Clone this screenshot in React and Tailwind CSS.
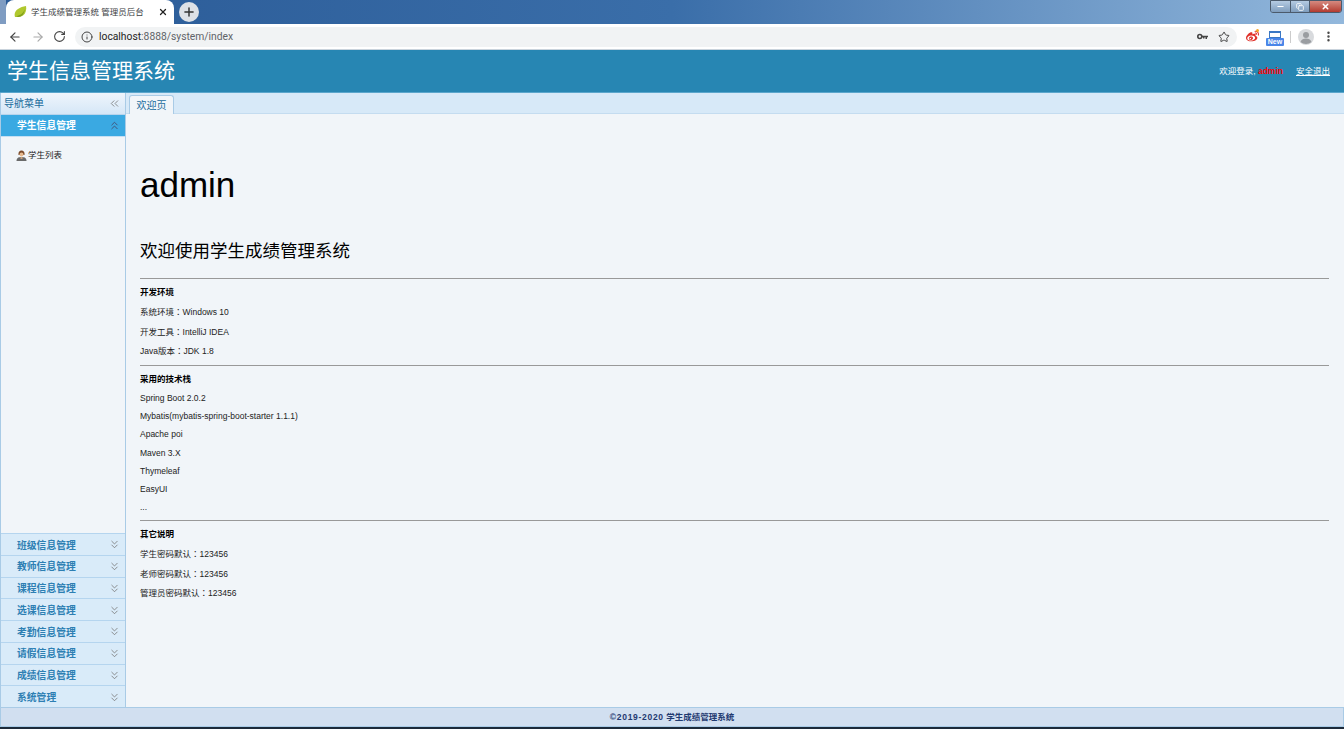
import React from 'react';
import { ArrowLeft, ArrowRight, RotateCw, Info, Star, Plus, X, EllipsisVertical, ChevronsLeft, ChevronsUp, ChevronsDown, Minus, Copy } from 'lucide-react';
import { FaWeibo } from 'react-icons/fa';

const cjk = '"Liberation Sans", "Noto Sans CJK SC", sans-serif';

const menus = ['班级信息管理', '教师信息管理', '课程信息管理', '选课信息管理', '考勤信息管理', '请假信息管理', '成绩信息管理', '系统管理'];

function Leaf() {
  return (
    <svg width="13" height="12" viewBox="0 0 13 12">
      <path d="M1 11C-1 5 5 1 12 0c1 6-2 11-8 11z" fill="#b0c82e" />
      <path d="M2 10c3 0 7-2 9-7-1 5-3 8-7 8z" fill="#7f9f1c" />
    </svg>
  );
}

function KeyIcon() {
  return (
    <svg width="11" height="8" viewBox="0 0 11 8" className="ml-auto">
      <circle cx="2.800" cy="3.500" r="2" fill="none" stroke="#444" strokeWidth="1.600" />
      <path d="M5 2.700h6v1.600h-1v1.700H8.500V4.300H7.500v1.200H6V4.300H5z" fill="#444" />
    </svg>
  );
}

function Avatar() {
  return (
    <svg width="16" height="16" viewBox="0 0 16 16">
      <circle cx="8" cy="8" r="8" fill="#d8dadd" />
      <circle cx="8" cy="6" r="3" fill="#9a9da1" />
      <path d="M2.500 13c1-3 3-3.500 5.500-3.500s4.500.5 5.500 3.500c-3 2.500-8 2.500-11 0z" fill="#9a9da1" />
    </svg>
  );
}

function Student() {
  return (
    <svg width="11" height="11" viewBox="0 0 11 11">
      <path d="M2.500 5c-.5-3 1-4.500 3-4.500s3.500 1.500 3 4.500z" fill="#7b4a2a" />
      <circle cx="5.500" cy="4.500" r="2" fill="#e6b98e" />
      <path d="M.5 11c0-3.500 2.500-4 5-4s5 .5 5 4z" fill="#6a6a6a" />
      <path d="M4.500 7h2v2h-2z" fill="#c9a27c" />
    </svg>
  );
}

function Browser() {
  return (
    <div className="shrink-0">
      <div className="h-[24px] flex items-end bg-gradient-to-r from-[#2a5a96] via-[#3a6ea9] to-[#93b8dc]">
        <div className="w-[6px] h-full bg-[#7f9cc2]" />
        <div className="w-[168px] h-[24px] bg-white rounded-t-[8px] flex items-center pl-[8px] pr-[6px] gap-[4px]">
          <Leaf />
          <span className="text-[8.500px] text-[#3c4043] flex-1 whitespace-nowrap">学生成绩管理系统 管理员后台</span>
          <X size={10} strokeWidth={3} className="text-[#222]" />
        </div>
        <div className="ml-[5px] mb-[2px] w-[20px] h-[20px] rounded-full bg-[#dee1e6] flex items-center justify-center">
          <Plus size={14} strokeWidth={2.500} className="text-[#333]" />
        </div>
        <div className="ml-auto self-start mr-[2px] flex h-[13px] border border-[#4b5a6b] rounded-b-[3px] overflow-hidden">
          <div className="w-[19px] bg-gradient-to-b from-[#b5cbe2] to-[#7f9dbd] flex items-center justify-center"><Minus size={9} strokeWidth={3} className="text-white" /></div>
          <div className="w-[19px] bg-gradient-to-b from-[#b5cbe2] to-[#7f9dbd] border-l border-[#4b5a6b] flex items-center justify-center"><Copy size={8} strokeWidth={2.500} className="text-white" /></div>
          <div className="w-[32px] bg-gradient-to-b from-[#d58a80] to-[#b23a30] border-l border-[#4b5a6b] flex items-center justify-center"><X size={9} strokeWidth={4} className="text-white" /></div>
        </div>
      </div>
      <div className="h-[26px] bg-white flex items-center border-b border-[#c9d3dc]">
        <ArrowLeft size={14} strokeWidth={2} className="ml-[8px] text-[#444]" />
        <ArrowRight size={14} strokeWidth={2} className="ml-[9px] text-[#aaa]" />
        <RotateCw size={13} strokeWidth={2} className="ml-[8px] text-[#444]" />
        <div className="ml-[9px] w-[1162px] h-[20px] rounded-full bg-[#f1f3f4] flex items-center pl-[6px] pr-[7px]">
          <Info size={12} className="text-[#444]" />
          <span className="ml-[6px] mt-px text-[10.300px] text-[#5f6368]" style={{ fontFamily: 'Roboto, sans-serif' }}><span className="text-[#222]">localhost</span>:8888/system/index</span>
          <KeyIcon />
          <Star size={12} strokeWidth={2} className="ml-[10px] text-[#444]" />
        </div>
        <div className="relative ml-[9px]">
          <FaWeibo size={13} className="text-[#e0312a]" />
          <div className="absolute -top-[1px] right-0 w-[3px] h-[3px] rounded-full bg-[#f5a623]" />
        </div>
        <div className="ml-[7px] w-[18px] h-[18px] flex flex-col items-center justify-end">
          <div className="w-[12px] h-[7px] border border-[#3b78c4] border-t-2" />
          <div className="w-[18px] h-[8px] bg-[#4a86e8] rounded-[1px] text-[7px] leading-[8px] font-bold text-white text-center">New</div>
        </div>
        <div className="ml-[6px] w-px h-[12px] bg-[#ccc]" />
        <div className="ml-[7px]"><Avatar /></div>
        <EllipsisVertical size={13} strokeWidth={2.500} className="ml-[8px] text-[#444]" />
      </div>
    </div>
  );
}

function Sidebar() {
  return (
    <div className="w-[126px] shrink-0 flex flex-col border-x border-[#a9cbe6] bg-[#f1f5f9]">
      <div className="h-[22px] flex items-center justify-between pl-[3px] pr-[4px] bg-gradient-to-b from-[#eff5fc] to-[#d5e7f7] border-b border-[#b8d4ec]">
        <span className="text-[10px] text-[#1a6c9c]">导航菜单</span>
        <ChevronsLeft size={13} strokeWidth={1.500} className="text-[#777]" />
      </div>
      <div className="h-[21px] flex items-center justify-between pl-[16px] pr-[4px] bg-[#3aa9e2]">
        <span className="mt-[2px] text-[9.800px] font-bold text-white">学生信息管理</span>
        <ChevronsUp size={13} strokeWidth={1.500} className="text-[#446]" />
      </div>
      <div className="flex-1 pl-[15px] pt-[12px] border-t border-[#c5dff3]">
        <div className="flex items-center gap-px">
          <Student />
          <span className="text-[8.500px] text-[#222]">学生列表</span>
        </div>
      </div>
      {menus.map((m) => (
        <div key={m} className="h-[21.750px] flex items-center justify-between pl-[16px] pr-[4px] pt-px bg-[#d9ebf9] border-t border-[#b5d5ef]">
          <span className="mt-[2px] text-[9.800px] font-bold text-[#2d7fb3]">{m}</span>
          <ChevronsDown size={13} strokeWidth={1.500} className="text-[#777]" />
        </div>
      ))}
    </div>
  );
}

function Line({ label, value }) {
  return (
    <p className="h-[13px] text-[8.500px] leading-[13px] text-[#222]">
      {label}
      {label && <span className="leading-none" style={{ fontFamily: '"Noto Sans CJK TC", sans-serif' }}>：</span>}
      {value}
    </p>
  );
}

function Title({ children, className }) {
  return <p className={`text-[8.500px] leading-[13px] font-bold text-black ${className}`}>{children}</p>;
}

function Main() {
  return (
    <div className="flex-1 min-w-0 flex flex-col">
      <div className="h-[21px] bg-[#d7e9f8] flex items-end pl-[3px] border-b border-[#c4dcf0]">
        <div className="h-[19px] -mb-px w-[45px] bg-[#f1f5f9] border border-b-0 border-[#a9cbe6] rounded-t-[3px] text-[10px] leading-[19px] text-center text-[#1a6c9c]">欢迎页</div>
      </div>
      <div className="flex-1 bg-[#f1f5f9] pl-[14px] pr-[15px] text-[#222]">
        <h1 className="mt-[46px] text-[35px] leading-[50px] text-black">admin</h1>
        <h2 className="mt-[29px] text-[17.500px] leading-[24px] text-black">欢迎使用学生成绩管理系统</h2>
        <hr className="mt-[15px] border-[#999]" />
        <Title className="mt-[7px]">开发环境</Title>
        <div className="mt-[7px] flex flex-col gap-[6.500px]">
          <Line label="系统环境" value="Windows 10" />
          <Line label="开发工具" value="IntelliJ IDEA" />
          <Line label="Java版本" value="JDK 1.8" />
        </div>
        <hr className="mt-[7px] border-[#999]" />
        <Title className="mt-[7px]">采用的技术栈</Title>
        <div className="mt-[6px] flex flex-col gap-[5.200px]">
          <Line value="Spring Boot 2.0.2" />
          <Line value="Mybatis(mybatis-spring-boot-starter 1.1.1)" />
          <Line value="Apache poi" />
          <Line value="Maven 3.X" />
          <Line value="Thymeleaf" />
          <Line value="EasyUI" />
          <Line value="..." />
        </div>
        <hr className="mt-[6px] border-[#999]" />
        <Title className="mt-[7px]">其它说明</Title>
        <div className="mt-[7px] flex flex-col gap-[6.500px]">
          <Line label="学生密码默认" value="123456" />
          <Line label="老师密码默认" value="123456" />
          <Line label="管理员密码默认" value="123456" />
        </div>
      </div>
    </div>
  );
}

export default function App() {
  return (
    <div className="h-[729px] w-[1344px] overflow-hidden flex flex-col bg-[#1c2a3a]" style={{ fontFamily: cjk }}>
      <Browser />
      <div className="h-[43px] shrink-0 bg-[#2786b3] flex items-center pl-[7px] pr-[14px] border-b border-[#5ba6cc]">
        <span className="text-[21px] text-white">学生信息管理系统</span>
        <span className="ml-auto text-[8.500px] text-white">欢迎登录, <span className="font-bold text-[#f00]">admin</span></span>
        <a className="ml-[13px] text-[8.500px] text-white underline">安全退出</a>
      </div>
      <div className="flex-1 min-h-0 flex">
        <Sidebar />
        <Main />
      </div>
      <div className="h-[20px] shrink-0 mb-[2px] bg-[#d1dff0] border border-[#a9cbe6] text-center text-[8.500px] leading-[18px] font-bold text-[#1f3a70]"><span className="tracking-[0.700px]">©2019-2020</span> 学生成绩管理系统</div>
    </div>
  );
}
